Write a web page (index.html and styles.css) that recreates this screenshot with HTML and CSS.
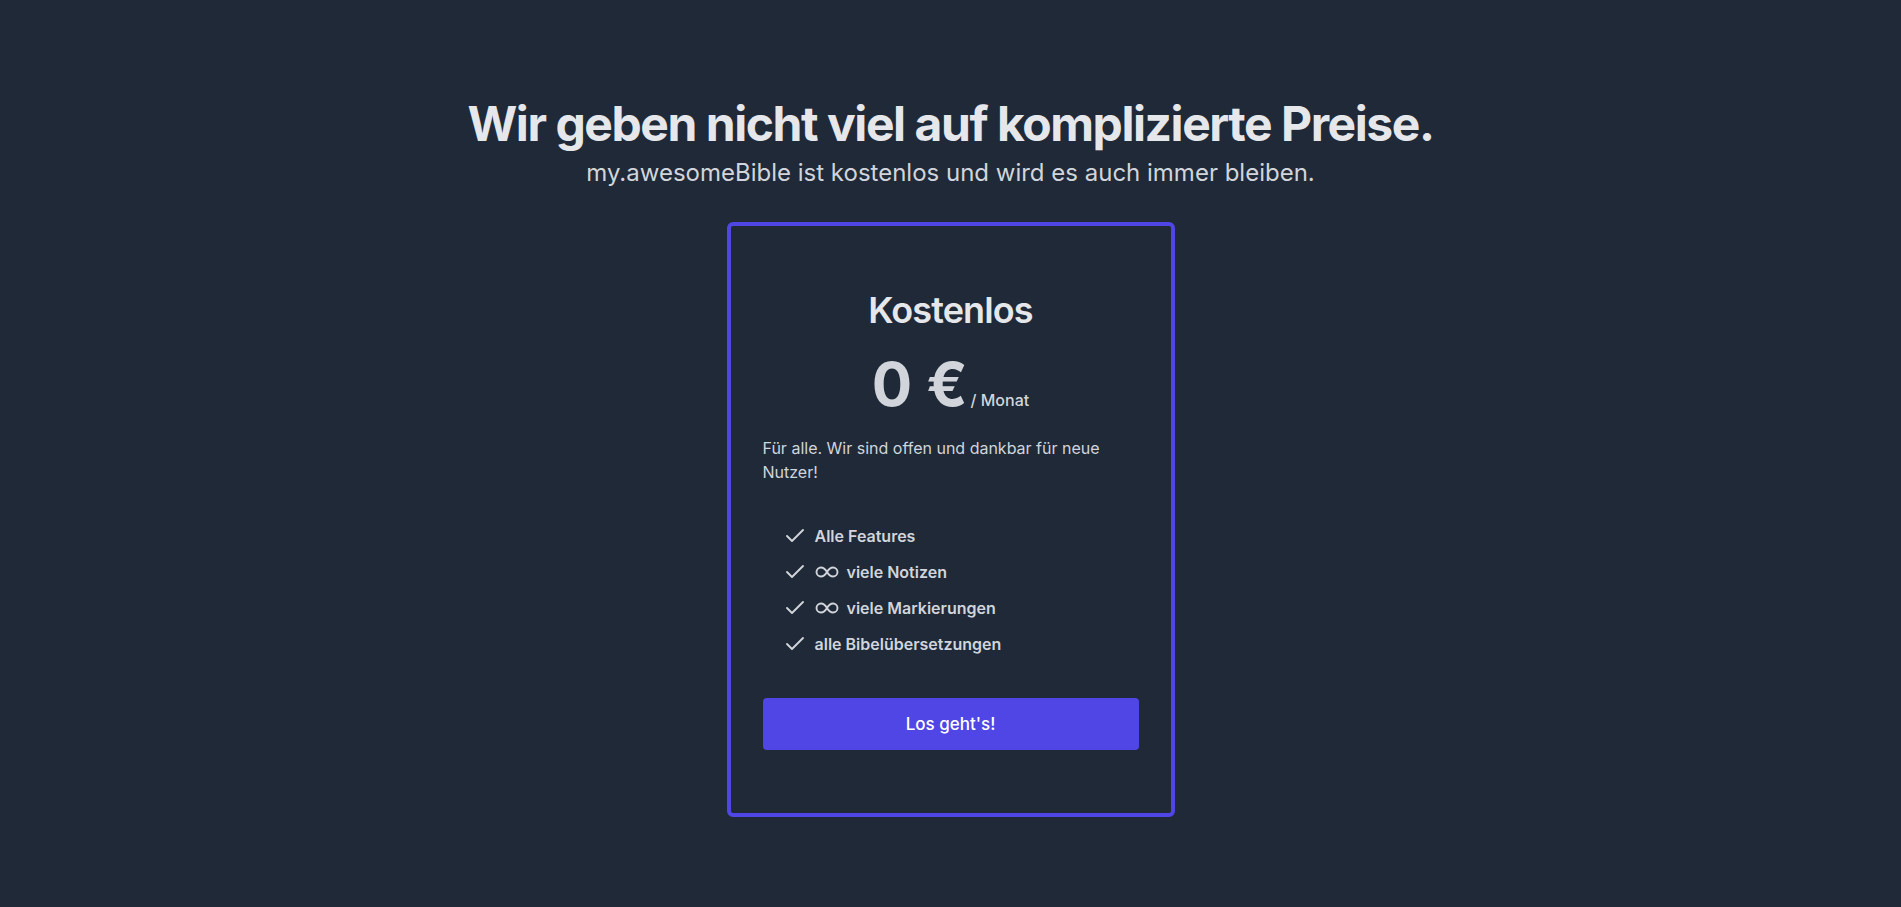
FILE: index.html
```html
<!DOCTYPE html>
<html lang="de">
<head>
<meta charset="utf-8">
<title>Preise</title>
<link rel="stylesheet" href="styles.css">
</head>
<body>
<main class="pricing">
  <h1 class="pricing__title">Wir geben nicht viel auf komplizierte Preise.</h1>
  <p class="pricing__subtitle">my.awesomeBible ist kostenlos und wird es auch immer bleiben.</p>
  <section class="card">
    <h2 class="card__name">Kostenlos</h2>
    <div class="card__price">
      <span class="card__amount">0 €</span><span class="card__period">/ Monat</span>
    </div>
    <p class="card__desc">Für alle. Wir sind offen und dankbar für neue Nutzer!</p>
    <ul class="features">
      <li class="feature">
        <svg class="feature__check" viewBox="0 0 24 24" width="24" height="24" fill="none" stroke="currentColor" stroke-width="1.9" stroke-linecap="round" stroke-linejoin="round"><polyline points="20 6 9 17 4 12"/></svg>
        <span>Alle Features</span>
      </li>
      <li class="feature">
        <svg class="feature__check" viewBox="0 0 24 24" width="24" height="24" fill="none" stroke="currentColor" stroke-width="1.9" stroke-linecap="round" stroke-linejoin="round"><polyline points="20 6 9 17 4 12"/></svg>
        <svg class="feature__inf" viewBox="0 0 24 12" width="24" height="12" fill="none" stroke="currentColor" stroke-width="1.9" stroke-linecap="round" stroke-linejoin="round"><path d="M12 6c-1.5-2.5-3.5-4.5-6-4.5a4.5 4.5 0 0 0 0 9c2.5 0 4.5-2 6-4.5s3.5-4.5 6-4.5a4.5 4.5 0 0 1 0 9c-2.5 0-4.5-2-6-4.5z"/></svg>
        <span>viele Notizen</span>
      </li>
      <li class="feature">
        <svg class="feature__check" viewBox="0 0 24 24" width="24" height="24" fill="none" stroke="currentColor" stroke-width="1.9" stroke-linecap="round" stroke-linejoin="round"><polyline points="20 6 9 17 4 12"/></svg>
        <svg class="feature__inf" viewBox="0 0 24 12" width="24" height="12" fill="none" stroke="currentColor" stroke-width="1.9" stroke-linecap="round" stroke-linejoin="round"><path d="M12 6c-1.5-2.5-3.5-4.5-6-4.5a4.5 4.5 0 0 0 0 9c2.5 0 4.5-2 6-4.5s3.5-4.5 6-4.5a4.5 4.5 0 0 1 0 9c-2.5 0-4.5-2-6-4.5z"/></svg>
        <span>viele Markierungen</span>
      </li>
      <li class="feature">
        <svg class="feature__check" viewBox="0 0 24 24" width="24" height="24" fill="none" stroke="currentColor" stroke-width="1.9" stroke-linecap="round" stroke-linejoin="round"><polyline points="20 6 9 17 4 12"/></svg>
        <span>alle Bibelübersetzungen</span>
      </li>
    </ul>
    <a class="card__button" href="#">Los geht's!</a>
  </section>
</main>
</body>
</html>
```

FILE: styles.css
```css
* { box-sizing: border-box; }

html, body {
  margin: 0;
  padding: 0;
  background: #1f2937;
}

body {
  font-family: Inter, "Noto Sans", "Liberation Sans", sans-serif;
  color: #d1d5db;
  min-height: 907px;
}

.pricing {
  display: flex;
  flex-direction: column;
  align-items: center;
  padding-top: 100px;
}

.pricing__title {
  margin: 0;
  font-size: 48px;
  line-height: 48px;
  font-weight: 700;
  color: #e5e7eb;
  letter-spacing: -1.45px;
}

.pricing__subtitle {
  margin: 9px 0 0;
  font-size: 24px;
  line-height: 32px;
  color: #d1d5db;
}

.card {
  margin-top: 33px;
  width: 448px;
  border: 4px solid #4f46e5;
  border-radius: 6px;
  padding: 64px 32px 63px;
  display: flex;
  flex-direction: column;
}

.card__name {
  margin: 0;
  text-align: center;
  font-size: 36px;
  line-height: 40px;
  font-weight: 600;
  letter-spacing: -0.9px;
  color: #e5e7eb;
}

.card__price {
  margin-top: 24px;
  display: flex;
  justify-content: center;
  align-items: baseline;
  color: #d1d5db;
}

.card__amount {
  font-size: 60px;
  line-height: 60px;
  font-weight: 700;
}

.card__period {
  margin-left: 3px;
  font-size: 16px;
  line-height: 24px;
  font-weight: 500;
}

.card__desc {
  margin: 22px 0 0;
  font-size: 16px;
  line-height: 24px;
  color: #d1d5db;
}

.features {
  list-style: none;
  margin: 40px 0 0;
  padding: 0 0 0 20px;
  display: flex;
  flex-direction: column;
  gap: 12px;
}

.feature {
  display: flex;
  align-items: center;
  gap: 8px;
  height: 24px;
  font-size: 16px;
  font-weight: 600;
  color: #d1d5db;
}

.feature__check,
.feature__inf {
  flex: none;
}

.card__button {
  margin-top: 42px;
  display: block;
  background: #4f46e5;
  color: #ffffff;
  text-align: center;
  text-decoration: none;
  font-size: 17px;
  line-height: 28px;
  font-weight: 500;
  padding: 12px 0;
  border-radius: 4px;
}
```
